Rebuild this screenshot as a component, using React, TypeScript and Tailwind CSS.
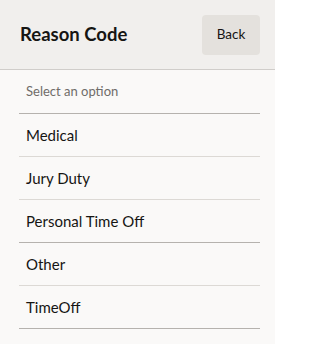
const OPTIONS = ["Medical", "Jury Duty", "Personal Time Off", "Other", "TimeOff"];

export default function App() {
  return (
    <div
      className="w-[275px] h-[344px] bg-[#faf9f8] text-[#161513] overflow-hidden"
      style={{ fontFamily: 'Lato, "Noto Sans", sans-serif' }}
    >
      {/* Header */}
      <div className="h-[70px] flex items-center justify-between pl-5 pr-[15px] bg-[#f1efed] border-b border-[#d0cdca]">
        <h1 className="text-[18.5px] font-bold">Reason Code</h1>
        <button className="w-[58px] h-[40px] rounded-[4px] bg-[#e4e1dd] text-[13.5px] text-[#161513]">
          Back
        </button>
      </div>

      {/* Options */}
      <div className="ml-[19px] mr-[15px] mt-[1px]">
        <div className="h-[43px] flex items-center px-[7px] text-[13px] text-[#6f6c69] border-b border-[#b5b2ae]">
          Select an option
        </div>
        {OPTIONS.map((opt, i) => (
          <div
            key={opt}
            className={`h-[43px] flex items-center px-[7px] text-[15px] border-b ${
              i === 2 || i === OPTIONS.length - 1 ? "border-[#b5b2ae]" : "border-[#dcd9d5]"
            }`}
          >
            {opt}
          </div>
        ))}
      </div>
    </div>
  );
}
